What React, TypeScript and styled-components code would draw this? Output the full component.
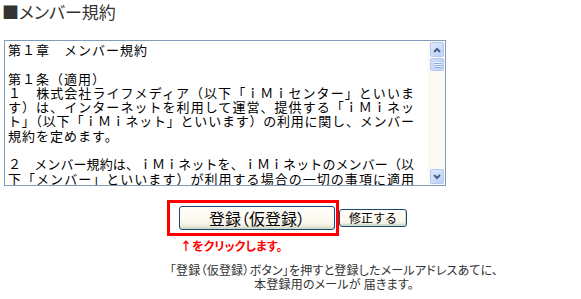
import styled, { createGlobalStyle } from "styled-components";

const GlobalStyle = createGlobalStyle`
  body {
    margin: 0;
    background: #ffffff;
    font-family: "Noto Sans CJK JP", "Noto Sans", sans-serif;
  }
`;

// full: 行末まで埋まる行（幅いっぱいに揃える）
const termsLines: { text: string; full?: boolean }[] = [
  { text: "第１章　メンバー規約" },
  { text: "" },
  { text: "第１条（適用）" },
  { text: "１　株式会社ライフメディア（以下「ｉＭｉセンター」といいま", full: true },
  { text: "す）は、インターネットを利用して運営、提供する「ｉＭｉネッ", full: true },
  { text: "ト」（以下「ｉＭｉネット」といいます）の利用に関し、メンバー", full: true },
  { text: "規約を定めます。" },
  { text: "" },
  { text: "２　メンバー規約は、ｉＭｉネットを、ｉＭｉネットのメンバー（以", full: true },
  { text: "下「メンバー」といいます）が利用する場合の一切の事項に適用", full: true },
];

const App = () => {
  return (
    <>
      <GlobalStyle />
      <Page>
        <Title>■メンバー規約</Title>
        <TermsBox>
          <TermsText>
            {termsLines.map((line, i) => (
              <Line key={i} $full={line.full}>
                {line.text}
              </Line>
            ))}
          </TermsText>
          <ScrollBar>
            <ScrollButton>
              <svg width="8" height="6" viewBox="0 0 8 6">
                <path d="M1 5 L4 2 L7 5" stroke="#4d6185" strokeWidth="2" fill="none" />
              </svg>
            </ScrollButton>
            <Thumb>
              <Grip />
              <Grip />
              <Grip />
            </Thumb>
            <Track />
            <ScrollButton>
              <svg width="8" height="6" viewBox="0 0 8 6">
                <path d="M1 1 L4 4 L7 1" stroke="#4d6185" strokeWidth="2" fill="none" />
              </svg>
            </ScrollButton>
          </ScrollBar>
        </TermsBox>

        <ActionRow>
          <RedFrame>
            <MainButton type="button">登録（仮登録）</MainButton>
          </RedFrame>
          <SubButton type="button">修正する</SubButton>
        </ActionRow>
        <ClickNote>↑をクリックします。</ClickNote>

        <Notice>
          「登録（仮登録）ボタン」を押すと登録したメールアドレスあてに、
          <br />
          本登録用のメールが 届きます。
        </Notice>
      </Page>
    </>
  );
};

const Page = styled.div`
  width: 581px;
  height: 299px;
  overflow: hidden;
`;

const Title = styled.h2`
  margin: 0;
  padding: 1px 0 0 2px;
  height: 21px;
  font-size: 17px;
  line-height: 21px;
  font-weight: normal;
  color: #333333;
  font-feature-settings: "palt";
`;

// 規約のテキストエリア
const TermsBox = styled.div`
  display: flex;
  box-sizing: border-box;
  margin: 18px 0 0 4px;
  width: 442px;
  height: 146px;
  border: 1px solid #7f9db9;
  background: #ffffff;
`;

const TermsText = styled.div`
  flex: 1;
  overflow: hidden;
  padding: 2px 3px;
  font-size: 13px;
  line-height: 14.3px;
  color: #000000;
`;

const Line = styled.div<{ $full?: boolean }>`
  height: 14.3px;
  white-space: pre;
  width: ${(p) => (p.$full ? "406px" : "auto")};
  letter-spacing: ${(p) => (p.$full ? "0" : "1px")};
  text-align: ${(p) => (p.$full ? "justify" : "left")};
  text-align-last: ${(p) => (p.$full ? "justify" : "auto")};
  white-space: ${(p) => (p.$full ? "normal" : "pre")};
`;

const ScrollBar = styled.div`
  display: flex;
  flex-direction: column;
  width: 17px;
  background: #fbf9f1;
`;

const ScrollButton = styled.div`
  display: flex;
  align-items: center;
  justify-content: center;
  box-sizing: border-box;
  width: 14px;
  height: 15px;
  margin: 1px 1px 1px 2px;
  border: 1px solid #b4c8f4;
  border-radius: 2px;
  background: linear-gradient(135deg, #dfe9fe, #bcd0fb);
`;

const Thumb = styled.div`
  display: flex;
  flex-direction: column;
  align-items: center;
  justify-content: center;
  gap: 1px;
  box-sizing: border-box;
  width: 14px;
  height: 13px;
  margin: 0 1px 0 2px;
  border: 1px solid #b4c8f4;
  border-radius: 2px;
  background: linear-gradient(90deg, #cfdcfd, #bdd0fb);
`;

const Grip = styled.div`
  width: 7px;
  height: 1px;
  background: #eef4fe;
  box-shadow: 0 1px 0 #8fa8e0;
`;

const Track = styled.div`
  flex: 1;
`;

// 登録ボタン周り
const ActionRow = styled.div`
  display: flex;
  align-items: center;
  margin: 14px 0 0 167px;
`;

const RedFrame = styled.div`
  display: flex;
  border: 3px solid #ff0000;
  padding: 3px 1px 3px 9px;
`;

const MainButton = styled.button`
  box-sizing: border-box;
  width: 156px;
  height: 24px;
  padding: 0;
  border: 1px solid #1c4878;
  border-radius: 3px;
  background: linear-gradient(#fffefa, #fbf8ee 70%, #e6e2d2);
  box-shadow: inset 0 -2px 0 #d2dccb;
  font-family: "Noto Sans CJK JP", sans-serif;
  font-size: 16px;
  line-height: 20px;
  color: #000000;
  font-feature-settings: "palt";
`;

const SubButton = styled.button`
  box-sizing: border-box;
  width: 68px;
  height: 18px;
  padding: 0;
  border: 1px solid #1c4878;
  border-radius: 3px;
  background: linear-gradient(#fffefa, #fbf8ee 70%, #e6e2d2);
  box-shadow: inset -1px -2px 0 #d2dccb;
  font-family: "Noto Sans CJK JP", sans-serif;
  font-size: 12px;
  line-height: 14px;
  color: #000000;
`;

const ClickNote = styled.div`
  margin: 2px 0 0 180px;
  font-size: 12px;
  line-height: 16px;
  font-weight: bold;
  color: #ff0000;
  font-feature-settings: "palt";
`;

const Notice = styled.div`
  margin: 9px 0 0 120px;
  width: 428px;
  text-align: center;
  font-size: 12px;
  line-height: 14px;
  letter-spacing: 0.2px;
  color: #333333;
  font-feature-settings: "palt";
`;

export default App;
